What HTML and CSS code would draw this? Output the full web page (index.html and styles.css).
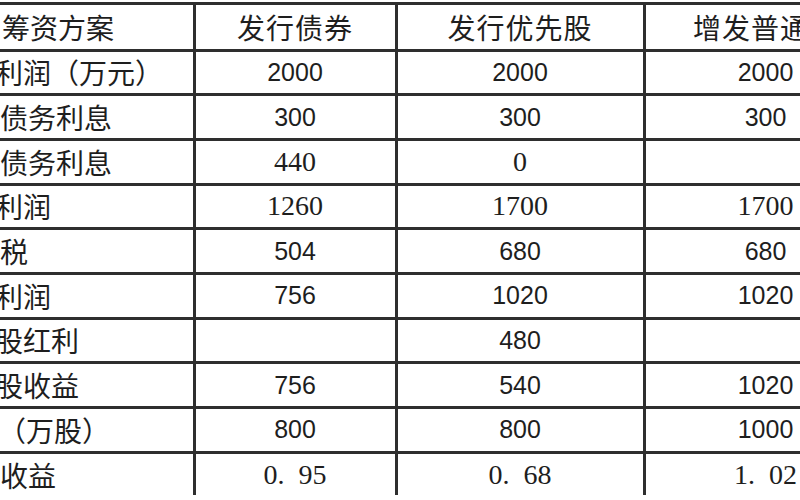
FILE: index.html
```html
<!DOCTYPE html>
<html lang="zh-CN">
<head>
<meta charset="utf-8">
<title>筹资方案</title>
<link rel="stylesheet" href="styles.css">
</head>
<body>
<div class="sheet">
  <div class="cell label head">筹资方案</div>
  <div class="cell head">发行债券</div>
  <div class="cell head">发行优先股</div>
  <div class="cell head">增发普通股</div>

  <div class="cell label"><span class="cut">利润（万元）</span></div>
  <div class="cell num">2000</div>
  <div class="cell num">2000</div>
  <div class="cell num">2000</div>

  <div class="cell label">债务利息</div>
  <div class="cell num">300</div>
  <div class="cell num">300</div>
  <div class="cell num">300</div>

  <div class="cell label">债务利息</div>
  <div class="cell num serif">440</div>
  <div class="cell num serif">0</div>
  <div class="cell num serif"></div>

  <div class="cell label"><span class="cut">利润</span></div>
  <div class="cell num serif">1260</div>
  <div class="cell num serif">1700</div>
  <div class="cell num serif">1700</div>

  <div class="cell label">税</div>
  <div class="cell num">504</div>
  <div class="cell num">680</div>
  <div class="cell num">680</div>

  <div class="cell label"><span class="cut">利润</span></div>
  <div class="cell num">756</div>
  <div class="cell num">1020</div>
  <div class="cell num">1020</div>

  <div class="cell label"><span class="cut">股红利</span></div>
  <div class="cell num"></div>
  <div class="cell num">480</div>
  <div class="cell num"></div>

  <div class="cell label"><span class="cut">股收益</span></div>
  <div class="cell num">756</div>
  <div class="cell num">540</div>
  <div class="cell num">1020</div>

  <div class="cell label"><span class="paren">（万股）</span></div>
  <div class="cell num">800</div>
  <div class="cell num">800</div>
  <div class="cell num">1000</div>

  <div class="cell label">收益</div>
  <div class="cell num serif">0.&nbsp;&nbsp;95</div>
  <div class="cell num serif">0.&nbsp;&nbsp;68</div>
  <div class="cell num serif">1.&nbsp;&nbsp;02</div>
</div>
</body>
</html>
```

FILE: styles.css
```css
html, body {
  margin: 0;
  padding: 0;
  width: 800px;
  height: 500px;
  overflow: hidden;
  background: #ffffff;
}

.sheet {
  display: grid;
  grid-template-columns: 192.5px 199px 245px 240px;
  grid-template-rows: 43.5px repeat(10, 41.7px);
  gap: 3px;
  padding-top: 3px;
  margin-top: 2px;
  background: #2e2e2e;
  width: max-content;
  font-family: "Noto Sans CJK SC", "Noto Sans", sans-serif;
  color: #1e1e1e;
}

.cell {
  background: #ffffff;
  display: flex;
  align-items: center;
  justify-content: center;
  font-size: 27px;
  white-space: nowrap;
  overflow: hidden;
  line-height: 1;
}

.head {
  font-size: 28px;
  letter-spacing: 1px;
}

.label {
  justify-content: flex-start;
  font-size: 28px;
}

.label.head {
  padding-left: 2px;
  letter-spacing: 0;
}

.cut {
  margin-left: -5px;
}

.paren {
  margin-left: -2px;
}

.num {
  font-family: "Liberation Sans", "Noto Sans CJK SC", sans-serif;
  font-size: 25px;
}

.serif {
  font-family: "Liberation Serif", "Noto Sans CJK SC", serif;
  font-size: 28px;
}
```
